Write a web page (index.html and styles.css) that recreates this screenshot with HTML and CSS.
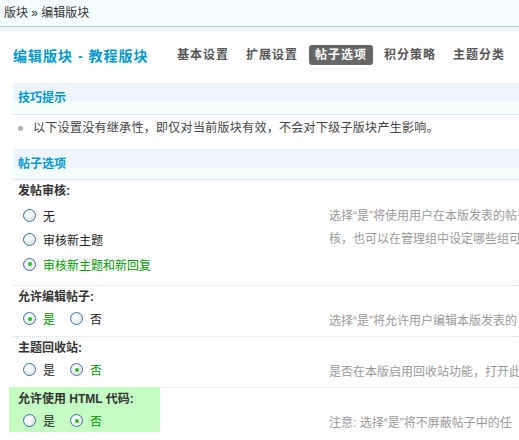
FILE: index.html
```html
<!DOCTYPE html>
<html lang="zh-CN">
<head>
<meta charset="utf-8">
<title>编辑版块</title>
<link rel="stylesheet" href="styles.css">
</head>
<body>
<div class="topbar">版块 » 编辑版块</div>
<div class="band"></div>
<div class="header">
  <h1 class="title">编辑版块 - 教程版块</h1>
  <ul class="tabs">
    <li>基本设置</li>
    <li>扩展设置</li>
    <li class="active">帖子选项</li>
    <li>积分策略</li>
    <li>主题分类</li>
  </ul>
</div>
<div class="panel">
  <div class="sec-head sec-tip">技巧提示</div>
  <div class="tip"><span class="dot"></span>以下设置没有继承性，即仅对当前版块有效，不会对下级子版块产生影响。</div>
  <div class="sec-head sec-opt">帖子选项</div>

  <div class="setting first">
    <div class="left">
      <div class="label">发帖审核:</div>
      <div class="opts col">
        <label class="opt"><span class="radio"></span>无</label>
        <label class="opt"><span class="radio"></span>审核新主题</label>
        <label class="opt on"><span class="radio checked"></span>审核新主题和新回复</label>
      </div>
    </div>
    <div class="desc">选择“是”将使用用户在本版发表的帖子<br>核，也可以在管理组中设定哪些组可</div>
  </div>

  <div class="setting">
    <div class="left">
      <div class="label">允许编辑帖子:</div>
      <div class="opts">
        <label class="opt on"><span class="radio checked"></span>是</label>
        <label class="opt"><span class="radio"></span>否</label>
      </div>
    </div>
    <div class="desc">选择“是”将允许用户编辑本版发表的</div>
  </div>

  <div class="setting">
    <div class="left">
      <div class="label">主题回收站:</div>
      <div class="opts">
        <label class="opt"><span class="radio"></span>是</label>
        <label class="opt on"><span class="radio checked"></span>否</label>
      </div>
    </div>
    <div class="desc">是否在本版启用回收站功能，打开此</div>
  </div>

  <div class="setting last">
    <div class="left">
      <div class="hl">
        <div class="label">允许使用 HTML 代码:</div>
        <div class="opts">
          <label class="opt"><span class="radio"></span>是</label>
          <label class="opt on"><span class="radio checked"></span>否</label>
        </div>
      </div>
    </div>
    <div class="desc">注意: 选择“是”将不屏蔽帖子中的任</div>
  </div>
</div>
</body>
</html>
```
FILE: styles.css
```css
html, body {
  margin: 0;
  padding: 0;
  background: #fff;
}
body {
  font: 12px "Liberation Sans", "Noto Sans CJK SC", sans-serif;
  color: #333;
  overflow: hidden;
  width: 519px;
  height: 440px;
}
.topbar {
  height: 26px;
  line-height: 26px;
  padding-left: 4px;
  background: #f5ffff;
  border-bottom: 1px solid #aecfdc;
  color: #333;
  white-space: nowrap;
}
.band {
  height: 4px;
  background: #eef7fc;
}
.header {
  display: flex;
  align-items: center;
  height: 48px;
  padding-left: 13px;
  margin-bottom: 4px;
  white-space: nowrap;
}
.title {
  margin: 0;
  width: 158px;
  flex: none;
  font-size: 14px;
  font-weight: bold;
  letter-spacing: 1px;
  color: #0099cc;
}
.tabs {
  display: flex;
  list-style: none;
  margin: 0;
  padding: 0;
  gap: 5px;
}
.tabs li {
  padding: 0 6px;
  height: 20px;
  line-height: 20px;
  font-weight: bold;
  letter-spacing: 1px;
  color: #555;
  border-radius: 3px;
}
.tabs li.active {
  background: #666;
  color: #fff;
}
.panel {
  margin-left: 13px;
  white-space: nowrap;
}
.sec-head {
  padding-left: 5px;
  font-weight: bold;
  color: #0099cc;
  border-bottom: 1px dotted #c3dfee;
}
.sec-tip {
  height: 31px;
  line-height: 31px;
  background: linear-gradient(#eef5ff 0, #eef5ff 18px, #f5fffe 18px);
}
.sec-opt {
  height: 29px;
  line-height: 29px;
  background: linear-gradient(#eef5ff 0, #eef5ff 18px, #f5fffe 18px);
}
.tip {
  display: flex;
  align-items: center;
  padding: 3px 0 11px 5px;
  line-height: 20px;
  color: #444;
  letter-spacing: 0.3px;
  border-bottom: 1px solid #e6eff5;
}
.dot {
  width: 5px;
  height: 5px;
  border-radius: 50%;
  background: #b0b0b0;
  margin-right: 10px;
  flex: none;
}
.setting {
  display: flex;
  border-bottom: 1px dotted #c8e2f0;
}
.setting.last {
  border-bottom: none;
}
.left {
  width: 316px;
  flex: none;
  padding-bottom: 6px;
}
.label {
  padding-left: 5px;
  font-weight: bold;
  height: 22px;
  line-height: 22px;
  color: #333;
}
.desc {
  color: #999;
  line-height: 23px;
  padding-top: 24px;
}
.setting.first .label {
  height: 23px;
  line-height: 23px;
}
.setting.first .left {
  padding-bottom: 8px;
}
.setting.first .desc {
  padding-top: 25px;
}
.opts {
  display: flex;
  padding-left: 10px;
}
.opts.col {
  flex-direction: column;
}
.opt {
  display: flex;
  align-items: center;
  height: 22px;
  margin-right: 15px;
  color: #222;
}
.opts.col .opt {
  height: 24.5px;
}
.opt.on {
  color: #009900;
}
.radio {
  position: relative;
  flex: none;
  width: 11px;
  height: 11px;
  border-radius: 50%;
  border: 1px solid #3f6f9f;
  background: radial-gradient(circle at 40% 35%, #ffffff 0, #f4f4f4 40%, #d0d0d0 100%);
  box-shadow: inset 0 0 0 1px #e8eef4;
  margin-right: 7px;
}
.radio.checked::after {
  content: "";
  position: absolute;
  left: 3.5px;
  top: 3.5px;
  width: 4px;
  height: 4px;
  border-radius: 50%;
  background: #22bb22;
}
.hl {
  background: #c4fcc4;
  width: 147px;
  margin-left: -4px;
  padding-left: 4px;
  margin-top: -1px;
  padding-top: 1px;
}
.setting.last .left {
  padding-bottom: 0;
}
```
